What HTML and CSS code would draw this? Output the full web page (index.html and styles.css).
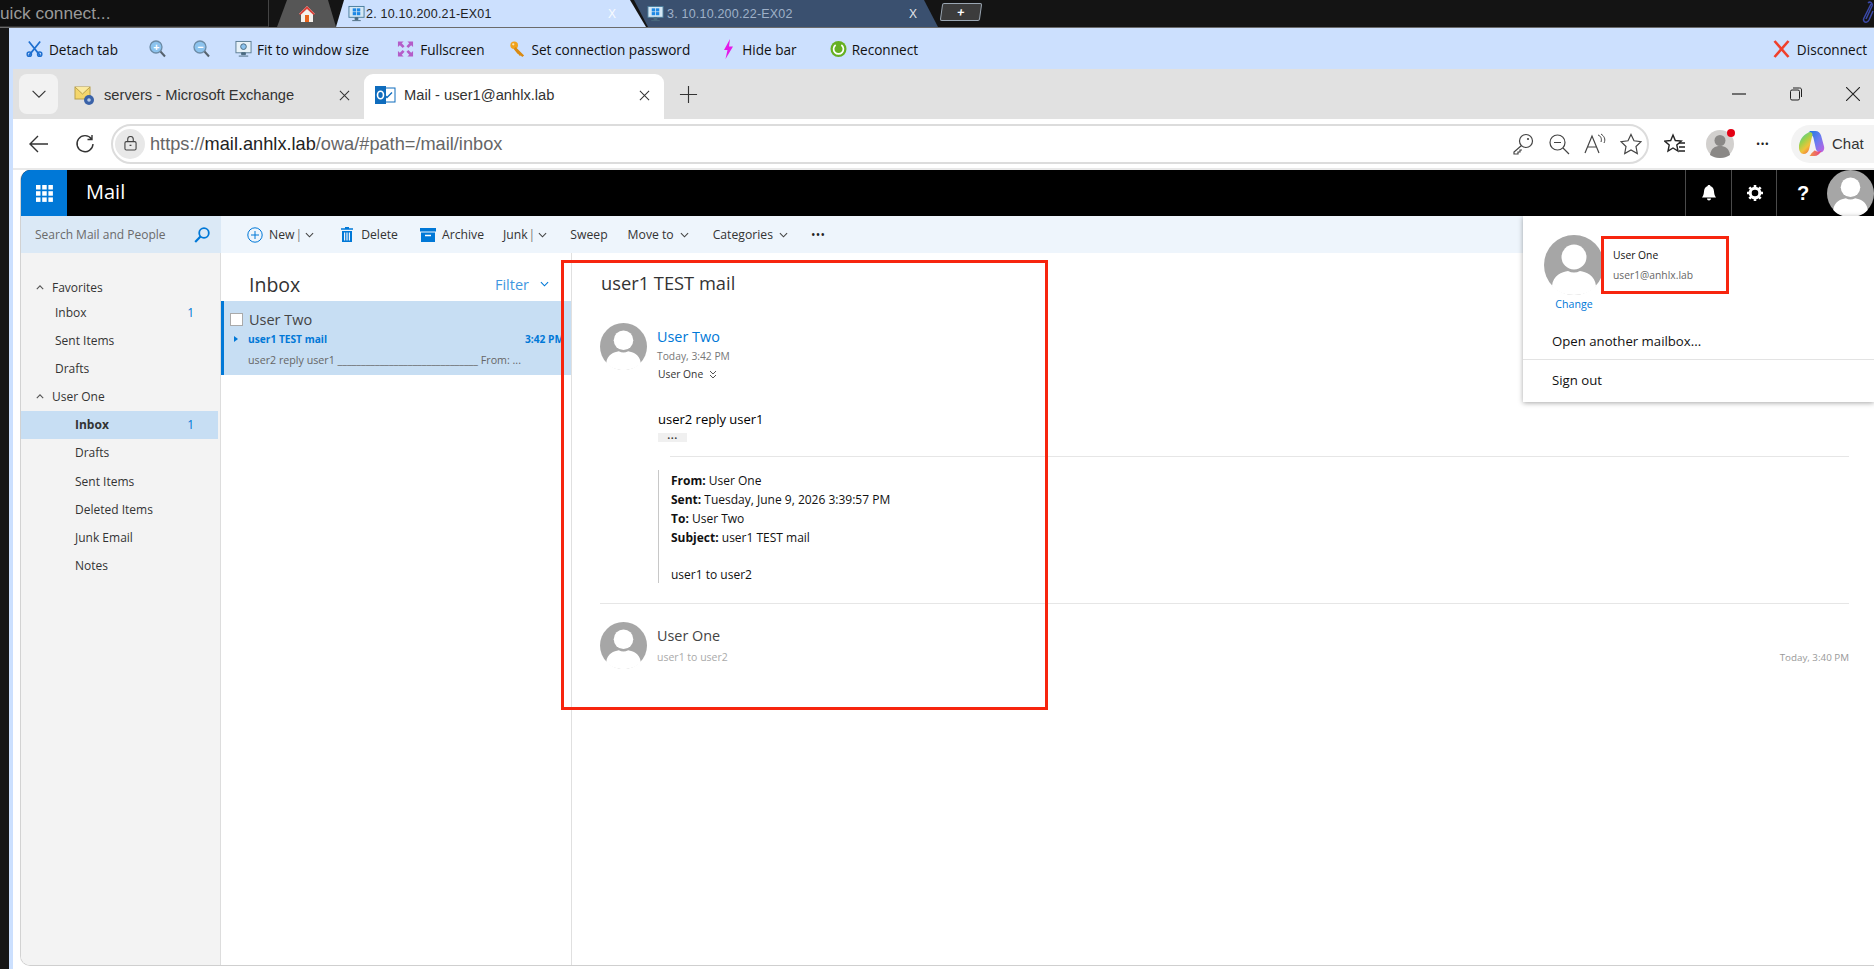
FILE: index.html
```html
<!DOCTYPE html>
<html lang="en">
<head>
<meta charset="utf-8">
<title>Mail - user1@anhlx.lab</title>
<link rel="stylesheet" href="styles.css">
</head>
<body>
<svg class="defs" width="0" height="0">
  <symbol id="avatar" viewBox="0 0 60 60">
    <circle cx="30" cy="30" r="30" fill="#a6a6a6"/>
    <circle cx="30" cy="22" r="12.5" fill="#fff"/>
    <path d="M8 51c1-11 10-14 16-15 4 2 8 2 12 0 6 1 15 4 16 15-5 6-13 9-22 9s-17-3-22-9z" fill="#fff"/>
  </symbol>
  <symbol id="monitor" viewBox="0 0 18 18">
    <rect x="1" y="1" width="16" height="11.5" fill="#d5e8f5" stroke="#4a7d9c"/>
    <rect x="5" y="3" width="3.6" height="3.3" fill="#1e88e5"/><rect x="9.4" y="3" width="3.6" height="3.3" fill="#1e88e5"/>
    <rect x="5" y="7" width="3.6" height="3.3" fill="#1e88e5"/><rect x="9.4" y="7" width="3.6" height="3.3" fill="#1e88e5"/>
    <path d="M7.500 13h3v2h-3zM4.500 16h9" fill="#4a6a80" stroke="#4a6a80"/>
  </symbol>
  <symbol id="zoomglass" viewBox="0 0 17 18">
    <circle cx="7" cy="7" r="6" fill="#8cc3ee" stroke="#6c8ba5" stroke-width="1.300"/>
    <path d="M11.500 11.500l4.500 5" stroke="#56626d" stroke-width="2"/>
  </symbol>
  <symbol id="chev" viewBox="0 0 10 6">
    <path d="M1 1l4 4 4-4" fill="none" stroke="currentColor" stroke-width="1.100" vector-effect="non-scaling-stroke"/>
  </symbol>
</svg>

<div class="page">
  <header class="topbar">
    <div class="quick"><span class="quicktext">uick connect...</span></div>
    <div class="hometab">
      <svg class="ic16" viewBox="0 0 18 18"><path d="M9 1L1 9h2v8h12V9h2z" fill="#f4f0ec"/><path d="M9 1L1 9l1.500 1L9 4l6.500 6L17 9z" fill="#d9423a"/><rect x="7" y="10" width="4" height="7" fill="#e8641e"/></svg>
    </div>
    <div class="rtab rtab-on">
      <svg class="ic18"><use href="#monitor"/></svg>
      <span class="rtabname">2. 10.10.200.21-EX01</span>
      <span class="rtabx">X</span>
    </div>
    <div class="rtab rtab-off">
      <svg class="ic18"><use href="#monitor"/></svg>
      <span class="rtabname">3. 10.10.200.22-EX02</span>
      <span class="rtabx">X</span>
    </div>
    <div class="addtab">+</div>
    <svg class="clip" viewBox="0 0 14 24"><path d="M11 3L4 17c-2 4 3 6 5 2l4-9M8 2c2-2 5 0 4 3L6 18" fill="none" stroke="#3a49a8" stroke-width="1.500"/></svg>
  </header>

  <div class="desk">
    <div class="strip"></div>
    <div class="rdp">
      <nav class="rbar">
        <div class="ritem it-detach">
          <svg class="ic18" viewBox="0 0 18 18"><path d="M3 1l12 15M15 1L3 16" stroke="#1e6fd0" stroke-width="1.800"/><circle cx="3.500" cy="14.500" r="2.300" fill="none" stroke="#1e6fd0" stroke-width="1.500"/><circle cx="14.500" cy="14.500" r="2.300" fill="none" stroke="#1e6fd0" stroke-width="1.500"/></svg>
          <span>Detach tab</span>
        </div>
        <div class="ritem it-zin"><svg class="ic18"><use href="#zoomglass"/></svg><b class="zsign">+</b></div>
        <div class="ritem it-zout"><svg class="ic18"><use href="#zoomglass"/></svg><b class="zsign">−</b></div>
        <div class="ritem it-fit">
          <svg class="ic18" viewBox="0 0 18 18"><rect x="1" y="1" width="16" height="12" fill="#e8f2f8" stroke="#5c7d93"/><circle cx="9" cy="6.500" r="3" fill="#8cc3ee" stroke="#4a6a80"/><path d="M7 13h4v2H7zM4 16.500h10" stroke="#4a6a80" fill="#4a6a80"/></svg>
          <span>Fit to window size</span>
        </div>
        <div class="ritem it-full">
          <svg class="ic18" viewBox="0 0 18 18" fill="#b45cc8"><path d="M1 1h6L5 3l3 3-2 2-3-3-2 2zM17 1v6l-2-2-3 3-2-2 3-3-2-2zM1 17v-6l2 2 3-3 2 2-3 3 2 2zM17 17h-6l2-2-3-3 2-2 3 3 2-2z"/></svg>
          <span>Fullscreen</span>
        </div>
        <div class="ritem it-key">
          <svg class="ic18" viewBox="0 0 18 18"><circle cx="5.500" cy="5" r="4" fill="#f0a21c"/><path d="M7 7l9 9-2 1.500-1.500-1.500-1 .5-1.500-2-1-.5-4-5z" fill="#d98a12"/><circle cx="4.500" cy="4" r="1.200" fill="#fde6b0"/></svg>
          <span>Set connection password</span>
        </div>
        <div class="ritem it-hide">
          <svg class="ic-bolt" viewBox="0 0 11 20"><path d="M7 0L1 11h3.500L2.500 20 10 7.500H6z" fill="#e31ae8"/></svg>
          <span>Hide bar</span>
        </div>
        <div class="ritem it-rec">
          <svg class="ic18" viewBox="0 0 18 18"><circle cx="9" cy="9" r="8.500" fill="#66b022"/><path d="M6 4.800A5.200 5.200 0 1 0 12 4.800" fill="none" stroke="#fff" stroke-width="1.800"/><path d="M9 2v4" stroke="#66b022"/></svg>
          <span>Reconnect</span>
        </div>
        <div class="ritem it-disc">
          <svg class="ic18" viewBox="0 0 16 18"><path d="M1 1l14 16M15 1L1 17" stroke="#f0402c" stroke-width="2.600"/></svg>
          <span>Disconnect</span>
        </div>
      </nav>

      <div class="browser">
        <div class="tabstrip">
          <div class="collapse"><svg class="chev16"><use href="#chev"/></svg></div>
          <div class="btab">
            <svg class="ic22" viewBox="0 0 22 22"><rect x="1" y="3" width="15" height="12" fill="#f4d66c" stroke="#b9a04a"/><path d="M1 3l7.500 7L16 3" fill="#fbeaa0" stroke="#b9a04a"/><circle cx="15" cy="16" r="5" fill="#3a62a8"/><circle cx="15" cy="16" r="1.800" fill="#b8cce8"/></svg>
            <span class="btabname">servers - Microsoft Exchange</span>
            <svg class="xmark" viewBox="0 0 12 12"><path d="M1 1l10 10M11 1L1 11" stroke="#333" stroke-width="1.100"/></svg>
          </div>
          <div class="btab btab-on">
            <svg class="ic22" viewBox="0 0 22 22"><rect x="8" y="4" width="13" height="14" fill="#fff" stroke="#0f6cbd"/><path d="M10.500 11l2.500 2.500 5-5" fill="none" stroke="#0f6cbd" stroke-width="1.400"/><rect x="1" y="2" width="11" height="18" fill="#0f6cbd"/><ellipse cx="6.500" cy="11" rx="3" ry="3.800" fill="none" stroke="#fff" stroke-width="1.600"/></svg>
            <span class="btabname">Mail - user1@anhlx.lab</span>
            <svg class="xmark" viewBox="0 0 12 12"><path d="M1 1l10 10M11 1L1 11" stroke="#333" stroke-width="1.100"/></svg>
          </div>
          <svg class="newtab" viewBox="0 0 20 20"><path d="M10 1v18M1 10h18" stroke="#333" stroke-width="1.200"/></svg>
          <div class="winctl">
            <svg class="winbtn" viewBox="0 0 14 14"><path d="M0 7h14" stroke="#222" stroke-width="1.200"/></svg>
            <svg class="winbtn" viewBox="0 0 14 14"><rect x="1.500" y="3" width="9" height="10" rx="1.500" fill="none" stroke="#222"/><path d="M4 1h6.500c1.500 0 2 .5 2 2v7" fill="none" stroke="#222"/></svg>
            <svg class="winbtn" viewBox="0 0 14 14"><path d="M0 0l14 14M14 0L0 14" stroke="#222" stroke-width="1.100"/></svg>
          </div>
        </div>

        <div class="addr">
          <svg class="navic" viewBox="0 0 20 20"><path d="M19 10H2M9 2l-8 8 8 8" fill="none" stroke="#333" stroke-width="1.400"/></svg>
          <svg class="navic reload" viewBox="0 0 20 20"><path d="M16.500 5A8 8 0 1 0 18 10M17 1v4.500h-4.500" fill="none" stroke="#333" stroke-width="1.400"/></svg>
          <div class="urlbox">
            <span class="lock"><svg class="lockic" viewBox="0 0 14 16"><rect x="1" y="6" width="12" height="9" rx="1.500" fill="none" stroke="#444" stroke-width="1.200"/><path d="M4 6V3.500a3 3 0 0 1 6 0V6" fill="none" stroke="#444" stroke-width="1.200"/><path d="M6 10h2" stroke="#444" stroke-width="1.400"/></svg></span>
            <span class="url"><span class="urlfade">https://</span>mail.anhlx.lab<span class="urlfade">/owa/#path=/mail/inbox</span></span>
            <div class="urlicons">
              <svg class="ic22" viewBox="0 0 22 22"><circle cx="14" cy="8" r="6.500" fill="none" stroke="#444" stroke-width="1.200"/><circle cx="16" cy="6" r="1.100" fill="#444"/><path d="M9.500 12.500L2 19v2h4v-2h2v-2h2" fill="none" stroke="#444" stroke-width="1.200"/></svg>
              <svg class="ic22" viewBox="0 0 22 22"><circle cx="9.500" cy="9.500" r="7.500" fill="none" stroke="#444" stroke-width="1.200"/><path d="M15 15l6 6M6 9.500h7" stroke="#444" stroke-width="1.200"/></svg>
              <svg class="ic22" viewBox="0 0 22 22"><path d="M1 20L8 3l7 17M4 14h8" fill="none" stroke="#444" stroke-width="1.200"/><path d="M14 2c3 1 4 4 3 7M17 1c3 2 5 5 3 9" fill="none" stroke="#444"/></svg>
              <svg class="ic22" viewBox="0 0 22 22"><path d="M11 1.500l3 6.300 7 .9-5 4.800 1.300 7L11 17l-6.300 3.500 1.300-7-5-4.800 7-.9z" fill="none" stroke="#444" stroke-width="1.200"/></svg>
            </div>
          </div>
          <svg class="ic22 favs" viewBox="0 0 22 22"><path d="M9 2l2.300 5.500 6 .6-4.500 4 1.200 6L9 15l-5 3.100 1.200-6-4.500-4 6-.6z" fill="none" stroke="#222" stroke-width="1.400"/><path d="M15 10h6M15 14h6M15 18h6" stroke="#222" stroke-width="1.300"/></svg>
          <div class="profile">
            <svg class="profav" viewBox="0 0 28 28"><circle cx="14" cy="14" r="14" fill="#d2d0ce"/><circle cx="14" cy="10.500" r="5.500" fill="#8a8886"/><path d="M4 25c1-7 5-9 10-9s9 2 10 9c-3 2-6 3-10 3s-7-1-10-3z" fill="#8a8886"/></svg>
            <span class="reddot"></span>
          </div>
          <div class="bdots">•••</div>
          <div class="chat">
            <svg class="copilot" viewBox="0 0 28 28">
              <defs>
                <linearGradient id="cpa" x1="0" y1="0" x2="1" y2="1"><stop offset="0" stop-color="#1f78e0"/><stop offset=".5" stop-color="#6a7cf0"/><stop offset="1" stop-color="#c85fe0"/></linearGradient>
                <linearGradient id="cpb" x1="0" y1="0" x2=".6" y2="1"><stop offset="0" stop-color="#2fc7c0"/><stop offset=".45" stop-color="#9fd24a"/><stop offset=".75" stop-color="#f2c23a"/><stop offset="1" stop-color="#f0803a"/></linearGradient>
                <linearGradient id="cpc" x1="0" y1="0" x2="1" y2="0"><stop offset="0" stop-color="#f2a33a"/><stop offset="1" stop-color="#e7398c"/></linearGradient>
              </defs>
              <path d="M12 1h6c3 0 5 2 6 5l3 11c1 4-2 7-5 6-2 0-3-2-3.500-3.500L16 8c-.5-2-2-3-4-3z" fill="url(#cpa)"/>
              <path d="M10 3c2-1.500 5-1 5 2l-3.500 15c-.8 3-3 5-5.500 5C3 25 1 22 1 18 1 11 5 5 10 3z" fill="url(#cpb)"/>
              <path d="M11 27h6c3 0 6-2 7.500-6-2 2-5 2-7 0L14 24c-1 2-2 3-3 3z" fill="url(#cpc)"/>
            </svg>
            <span class="chattext">Chat</span>
          </div>
        </div>

        <div class="owa">
          <div class="owahead">
            <div class="waffle">
              <svg class="wafic" viewBox="0 0 17 17" fill="#fff"><rect width="4.500" height="4.500"/><rect x="6.200" width="4.500" height="4.500"/><rect x="12.400" width="4.500" height="4.500"/><rect y="6.200" width="4.500" height="4.500"/><rect x="6.200" y="6.200" width="4.500" height="4.500"/><rect x="12.400" y="6.200" width="4.500" height="4.500"/><rect y="12.400" width="4.500" height="4.500"/><rect x="6.200" y="12.400" width="4.500" height="4.500"/><rect x="12.400" y="12.400" width="4.500" height="4.500"/></svg>
            </div>
            <div class="apptitle">Mail</div>
            <div class="headbtns">
              <div class="hbtn"><svg class="hic" viewBox="0 0 16 16" fill="#fff"><path d="M8 0c1 0 1.500.6 1.600 1.300C12 2 12.800 4 13 6.500c.2 2.500.8 4.500 2 6H1c1.200-1.500 1.800-3.500 2-6C3.200 4 4 2 6.400 1.300 6.500.6 7 0 8 0zM6 13.500h4c0 1.200-.8 2-2 2s-2-.8-2-2z"/></svg></div>
              <div class="hbtn"><svg class="hic" viewBox="0 0 16 16"><circle cx="8" cy="8" r="4.800" fill="none" stroke="#fff" stroke-width="3"/><path d="M8 0v3M8 13v3M0 8h3M13 8h3M2.300 2.300l2.100 2.100M11.600 11.600l2.100 2.100M13.700 2.300l-2.100 2.100M4.400 11.600l-2.100 2.100" stroke="#fff" stroke-width="2.600"/></svg></div>
              <div class="hbtn qmark">?</div>
              <svg class="headav"><use href="#avatar"/></svg>
            </div>
          </div>

          <div class="cmdrow">
            <div class="search">
              <span class="searchtext">Search Mail and People</span>
              <svg class="searchic" viewBox="0 0 16 16"><circle cx="10" cy="6" r="4.800" fill="none" stroke="#0078d7" stroke-width="1.800"/><path d="M6.500 9.500L1.200 15" stroke="#0078d7" stroke-width="2.200"/></svg>
            </div>
            <div class="cmdbar">
              <span class="cmd cmd-new">
                <svg class="cmdic" viewBox="0 0 16 16"><circle cx="8" cy="8" r="7.200" fill="none" stroke="#0078d7"/><path d="M8 4v8M4 8h8" stroke="#0078d7"/></svg>
                New<i class="pipe">|</i><svg class="chevs"><use href="#chev"/></svg>
              </span>
              <span class="cmd cmd-del">
                <svg class="cmdic-d" viewBox="0 0 12 15" fill="#0078d7"><path d="M4 0h4v1.300h4v1.500H0V1.300h4z"/><path d="M1 4h10v11H1zM3 5.500v8h1.200v-8zm2.400 0v8h1.200v-8zm2.400 0v8H9v-8z" fill-rule="evenodd"/></svg>
                Delete
              </span>
              <span class="cmd cmd-arc">
                <svg class="cmdic-a" viewBox="0 0 16 14"><path d="M0 0h16v3.500H0zM1 4.500h14V14H1z" fill="#0078d7"/><path d="M5 7.500h6" stroke="#fff" stroke-width="1.500"/></svg>
                Archive
              </span>
              <span class="cmd cmd-junk">Junk<i class="pipe">|</i><svg class="chevs"><use href="#chev"/></svg></span>
              <span class="cmd cmd-sweep">Sweep</span>
              <span class="cmd cmd-move">Move to<svg class="chevs"><use href="#chev"/></svg></span>
              <span class="cmd cmd-cat">Categories<svg class="chevs"><use href="#chev"/></svg></span>
              <span class="cmd cmd-more">•••</span>
            </div>
          </div>

          <div class="panes">
            <aside class="folders">
              <div class="group group-top"><svg class="chevup"><use href="#chev"/></svg>Favorites</div>
              <div class="folder lvl1"><span>Inbox</span><span class="count">1</span></div>
              <div class="folder lvl1">Sent Items</div>
              <div class="folder lvl1">Drafts</div>
              <div class="group"><svg class="chevup"><use href="#chev"/></svg>User One</div>
              <div class="folder lvl2 folder-on"><span>Inbox</span><span class="count">1</span></div>
              <div class="folder lvl2">Drafts</div>
              <div class="folder lvl2">Sent Items</div>
              <div class="folder lvl2">Deleted Items</div>
              <div class="folder lvl2">Junk Email</div>
              <div class="folder lvl2">Notes</div>
            </aside>

            <section class="list">
              <div class="listhead">
                <span class="listtitle">Inbox</span>
                <span class="filter">Filter<svg class="filterchev"><use href="#chev"/></svg></span>
              </div>
              <div class="msg">
                <div class="msgfrom"><span class="check"></span>User Two</div>
                <div class="msgsubj"><span class="tri"></span><span>user1 TEST mail</span><span class="msgtime">3:42 PM</span></div>
                <div class="msgprev">user2 reply user1 ______________________________ From: ...</div>
              </div>
            </section>

            <main class="reading">
              <h1 class="subject">user1 TEST mail</h1>
              <div class="thread">
                <svg class="av47"><use href="#avatar"/></svg>
                <div>
                  <div class="sender">User Two</div>
                  <div class="when">Today, 3:42 PM</div>
                  <div class="towho">User One <svg class="dbl" viewBox="0 0 8 9"><path d="M1 1l3 3 3-3M1 5l3 3 3-3" fill="none" stroke="#555"/></svg></div>
                </div>
              </div>
              <div class="body">
                <p class="bodytext">user2 reply user1</p>
                <div class="ellip">•••</div>
                <hr class="rule">
                <blockquote class="quote">
                  <div><b>From:</b> User One</div>
                  <div><b>Sent:</b> Tuesday, June 9, 2026 3:39:57 PM</div>
                  <div><b>To:</b> User Two</div>
                  <div><b>Subject:</b> user1 TEST mail</div>
                  <div class="blank"></div>
                  <div class="quotebody">user1 to user2</div>
                </blockquote>
              </div>
              <hr class="rule2">
              <div class="thread thread2">
                <svg class="av47"><use href="#avatar"/></svg>
                <div class="t2text">
                  <div class="sender2">User One</div>
                  <div class="t2row"><span class="snippet">user1 to user2</span><span class="t2when">Today, 3:40 PM</span></div>
                </div>
              </div>
            </main>
          </div>
        </div>
      </div>
    </div>
  </div>

  <div class="menu">
    <div class="menutop">
      <div class="menuav">
        <svg class="av60"><use href="#avatar"/></svg>
        <span class="change">Change</span>
      </div>
      <div class="menuname">
        <div class="mn1">User One</div>
        <div class="mn2">user1@anhlx.lab</div>
      </div>
    </div>
    <div class="menuitem mi-open">Open another mailbox...</div>
    <div class="menuitem mi-out">Sign out</div>
  </div>

  <div class="redbox redbox-main"></div>
  <div class="redbox redbox-name"></div>
</div>
</body>
</html>
```

FILE: styles.css
```css
* { box-sizing: border-box; }
html, body { margin: 0; padding: 0; }
body { font-family: "Open Sans", "Liberation Sans", sans-serif; color: #333; background: #fff; overflow: hidden; }
.defs { position: absolute; }
.page { position: relative; width: 1874px; height: 969px; display: flex; flex-direction: column; overflow: hidden; }

/* remote-desktop tab bar */
.topbar { height: 28px; flex: none; background: #141414; border-bottom: 1px solid #6b6b6b; display: flex; align-items: stretch; }
.quick { width: 269px; height: 27px; border-right: 1px solid #444; border-bottom: 1px solid #333; background: #101010; display: flex; align-items: center; overflow: hidden; }
.quicktext { font-size: 17.300px; color: #9a9a9a; font-family: "Liberation Sans", sans-serif; }
.hometab { width: 67px; margin-left: 8px; background: #565656; clip-path: polygon(10px 0, 51px 0, 59px 27px, 0 27px); display: flex; align-items: center; padding-left: 21px; }
.rtab { height: 27px; display: flex; align-items: center; font-size: 12.500px; font-family: "Liberation Sans", sans-serif; letter-spacing: .2px; }
.rtab-on { width: 310px; margin-left: -8px; background: #cce0fe; color: #222; padding-left: 12px; clip-path: polygon(0 27px, 8px 0, 294px 0, 310px 27px); }
.rtab-off { width: 304px; margin-left: -12px; background: #3a506f; color: #9fb0c8; padding-left: 13px; clip-path: polygon(0 0, 290px 0, 304px 27px, 14px 27px); }
.rtabname { margin-left: 1px; width: 242px; }
.rtab-off .rtabname { margin-left: 3px; width: 242px; }
.rtabx { font-size: 12px; color: #fff; opacity: .85; }
.addtab { width: 40px; height: 18px; margin: 3px 0 0 3px; border: 1px solid #9aa6b2; background: #3c3c3c; color: #fff; font-size: 13px; font-weight: 700; display: flex; align-items: center; justify-content: center; transform: skewX(-8deg); border-radius: 2px; }
.clip { width: 14px; height: 24px; margin: 1px 0 0 auto; }
.ic16 { width: 18px; height: 18px; flex: none; }
.ic18 { width: 17px; height: 18px; flex: none; }
.ic22 { width: 22px; height: 22px; flex: none; }

/* desk */
.desk { flex: 1; min-height: 0; display: flex; }
.strip { width: 9px; flex: none; background: #161616; }
.rdp { flex: 1; min-width: 0; background: #cce0fe; display: flex; flex-direction: column; }

.rbar { height: 41px; flex: none; display: flex; align-items: center; padding: 1px 0 0 17px; font-size: 13.600px; color: #111; }
.ritem { display: flex; align-items: center; gap: 6px; position: relative; white-space: nowrap; }
.it-zin { margin-left: 31px; }
.it-zout { margin-left: 27px; }
.it-fit { margin-left: 25px; gap: 5px; }
.it-full { margin-left: 28px; gap: 6px; }
.it-key { margin-left: 24px; gap: 6px; }
.it-hide { margin-left: 33px; gap: 8px; }
.it-rec { margin-left: 33px; gap: 5px; }
.it-disc { margin-left: auto; margin-right: 7px; gap: 7px; }
.ic-bolt { width: 11px; height: 20px; flex: none; }
.zsign { position: absolute; left: 3px; top: -2px; width: 9px; text-align: center; color: #fff; font-size: 11px; line-height: 18px; }

.browser { flex: 1; min-height: 0; margin-left: 4px; background: #fff; display: flex; flex-direction: column; }
.tabstrip { height: 50px; flex: none; background: #e1e1e1; display: flex; align-items: flex-end; position: relative; }
.collapse { width: 39px; height: 40px; margin: 0 0 5px 6px; background: #f2f2f2; border-radius: 8px; display: flex; align-items: center; justify-content: center; color: #333; }
.chev16 { width: 16px; height: 10px; }
.btab { width: 306px; height: 45px; display: flex; align-items: center; color: #333; padding: 0 14px 3px 16px; }
.btab .btabname { margin-left: 8px; flex: 1; white-space: nowrap; font-family: "Liberation Sans", sans-serif; font-size: 14.700px; }
.btab-on { width: 300px; background: #fff; border-radius: 9px 9px 0 0; padding: 0 14px 3px 10px; }
.xmark { width: 11px; height: 11px; flex: none; }
.newtab { width: 19px; height: 19px; margin: 0 0 15px 15px; }
.winctl { margin-left: auto; display: flex; gap: 43px; padding: 0 14px 18px 0; }
.winbtn { width: 14px; height: 14px; }

.addr { height: 51px; flex: none; background: #fff; border-bottom: 2px solid #e9e9e9; display: flex; align-items: center; }
.navic { width: 20px; height: 20px; margin-left: 16px; flex: none; }
.reload { margin-left: 26px; }
.urlbox { width: 1538px; height: 40px; margin-left: 16px; border: 2px solid #dcdcdc; border-radius: 20px; display: flex; align-items: center; padding-left: 2px; }
.lock { width: 30px; height: 30px; border-radius: 50%; background: #e8e8e8; display: flex; align-items: center; justify-content: center; flex: none; }
.lockic { width: 13px; height: 15px; }
.url { margin-left: 5px; padding-top: 1px; font-size: 18.200px; font-family: "Liberation Sans", sans-serif; color: #222; }
.urlfade { color: #666; }
.urlicons { margin-left: auto; display: flex; gap: 14px; padding-right: 5px; }
.favs { margin-left: 15px; }
.profile { position: relative; width: 28px; height: 28px; margin-left: 20px; flex: none; }
.profav { width: 28px; height: 28px; display: block; }
.reddot { position: absolute; right: -1px; top: -1px; width: 8px; height: 8px; border-radius: 50%; background: #e40014; }
.bdots { margin-left: 22px; font-size: 11px; color: #222; letter-spacing: .3px; width: 22px; }
.chat { margin-left: 13px; height: 38px; flex: 1; background: #f3f3f3; border-radius: 19px 0 0 19px; display: flex; align-items: center; padding-left: 7px; gap: 7px; }
.copilot { width: 27px; height: 27px; flex: none; }
.chattext { font-size: 15px; color: #333; font-family: "Liberation Sans", sans-serif; }

/* OWA */
.owa { flex: 1; min-height: 0; margin: 0 0 3px 7px; display: flex; flex-direction: column; border-left: 1px solid #d2d2d2; border-bottom: 1px solid #cfcfcf; border-radius: 10px 0 0 10px; overflow: hidden; }
.owahead { height: 46px; flex: none; background: #000; display: flex; align-items: stretch; color: #fff; }
.waffle { width: 46px; background: #0078d7; display: flex; align-items: center; justify-content: center; }
.wafic { width: 17px; height: 17px; }
.apptitle { margin-left: 19px; font-size: 20px; line-height: 44px; }
.headbtns { margin-left: auto; display: flex; position: relative; overflow: hidden; width: 189px; }
.hbtn { width: 47px; padding-left: 2px; border-left: 1px solid #4a4a4a; display: flex; align-items: center; justify-content: center; }
.hic { width: 16px; height: 16px; }
.qmark { font-size: 20px; font-weight: 700; font-family: "Liberation Sans", sans-serif; padding-left: 7px; }
.headav { width: 47px; height: 47px; flex: none; margin-left: 5px; }

.cmdrow { height: 37px; flex: none; display: flex; }
.search { width: 200px; background: #dbe9f6; display: flex; align-items: center; padding: 0 11px 0 14px; justify-content: space-between; font-size: 12px; color: #6a6a6a; }
.searchic { width: 16px; height: 16px; }
.cmdbar { flex: 1; background: #eef5fc; display: flex; align-items: center; font-size: 12.200px; color: #333; padding-left: 26px; white-space: nowrap; }
.cmd { display: flex; align-items: center; }
.cmdic { width: 16px; height: 16px; margin-right: 6px; }
.cmdic-d { width: 12px; height: 15px; margin-right: 8px; }
.cmdic-a { width: 16px; height: 14px; margin-right: 6px; }
.pipe { font-style: normal; color: #777; margin: 0 3px 0 1px; }
.chevs { width: 9px; height: 6px; color: #444; }
.cmd-del { margin-left: 27px; }
.cmd-arc { margin-left: 22px; }
.cmd-junk { margin-left: 19px; }
.cmd-sweep { margin-left: 23px; }
.cmd-move { margin-left: 20px; }
.cmd-move .chevs, .cmd-cat .chevs { margin-left: 6px; }
.cmd-cat { margin-left: 24px; }
.cmd-more { margin-left: 23px; font-size: 12px; letter-spacing: .3px; color: #222; }

.panes { flex: 1; min-height: 0; display: flex; }
.folders { width: 200px; flex: none; background: #f3f3f3; border-right: 1px solid #ddd; padding: 23px 2px 0 0; font-size: 12px; color: #333; }
.group { height: 28px; display: flex; align-items: center; padding-left: 15px; }
.group-top { height: 22px; }
.chevup { width: 8px; height: 5px; margin-right: 8px; transform: rotate(180deg); color: #555; }
.folder { height: 28.200px; display: flex; align-items: center; justify-content: space-between; padding-right: 24px; }
.lvl1 { padding-left: 34px; }
.lvl2 { padding-left: 54px; }
.folder-on { background: #c7def3; font-weight: 700; }
.count { color: #0078d7; font-weight: 400; font-size: 12px; }

.list { width: 351px; flex: none; border-right: 1px solid #e0e0e0; }
.listhead { height: 48px; display: flex; align-items: center; justify-content: space-between; padding: 14px 22px 0 28px; }
.listtitle { font-size: 19.500px; color: #333; }
.filter { font-size: 14.500px; color: #3f97e0; display: flex; align-items: center; }
.filterchev { width: 9px; height: 6px; margin-left: 11px; color: #0078d7; }
.msg { height: 74px; background: #c7def3; border-left: 3px solid #0078d7; padding: 8px 7px 0 6px; }
.msgfrom { display: flex; align-items: center; font-size: 14.500px; color: #444; height: 20px; }
.check { width: 13px; height: 13px; background: #fff; border: 1px solid #aaa; margin-right: 6px; flex: none; }
.msgsubj { display: flex; align-items: center; margin-top: 1px; height: 18px; font-size: 10.200px; font-weight: 700; color: #0078d7; }
.tri { width: 0; height: 0; border-left: 4px solid #0078d7; border-top: 3.500px solid transparent; border-bottom: 3.500px solid transparent; margin: 0 10px 0 4px; flex: none; }
.msgtime { margin-left: auto; }
.msgprev { margin-top: 5px; padding-left: 18px; font-size: 10.700px; color: #666; white-space: nowrap; overflow: hidden; }

.reading { flex: 1; min-width: 0; padding: 0 25px 0 28px; }
.subject { margin: 17px 0 0 1px; font-size: 18.300px; line-height: 26px; font-weight: 400; color: #333; }
.thread { display: flex; margin-top: 27px; gap: 10px; }
.av47 { width: 47px; height: 47px; flex: none; }
.sender { font-size: 14.400px; line-height: 20px; color: #0078d7; margin-top: 4px; }
.when { font-size: 10.300px; line-height: 16px; margin-top: 1px; color: #777; }
.towho { font-size: 10.300px; line-height: 16px; margin-top: 2px; margin-left: 1px; color: #333; display: flex; align-items: center; gap: 6px; }
.dbl { width: 8px; height: 9px; }
.body { padding-left: 58px; margin-top: 27px; }
.bodytext { margin: 0; font-size: 13px; line-height: 20px; color: #000; }
.ellip { width: 29px; height: 9px; margin-top: 4px; background: #f0f0f0; color: #444; font-size: 8px; line-height: 9px; text-align: center; letter-spacing: .5px; }
.rule { height: 1px; margin: 14px 0 0 12px; border: 0; background: #e6e6e6; }
.quote { margin: 13px 0 0; padding: 1px 0 0 12px; border-left: 1px solid #c8c8c8; height: 113px; font-size: 12px; line-height: 19px; color: #111; }
.blank { height: 18px; }
.rule2 { height: 1px; margin: 20px 0 0; border: 0; background: #e6e6e6; }
.thread2 { margin-top: 18px; }
.t2text { flex: 1; min-width: 0; }
.sender2 { font-size: 14.400px; line-height: 20px; color: #444; margin-top: 4px; }
.t2row { display: flex; justify-content: space-between; align-items: center; margin-top: 4px; }
.snippet { font-size: 10.500px; color: #aaa; }
.t2when { font-size: 9.800px; color: #999; }

/* account menu */
.menu { position: absolute; left: 1523px; top: 216px; width: 351px; height: 186px; background: #fff; box-shadow: 0 1px 5px rgba(0,0,0,.35); }
.menutop { display: flex; padding: 19px 0 0 21px; height: 107px; }
.menuav { width: 60px; display: flex; flex-direction: column; align-items: center; }
.av60 { width: 60px; height: 60px; flex: none; }
.change { font-size: 10.600px; color: #0078d7; margin-top: 2px; }
.menuname { margin-left: 9px; padding-top: 12px; }
.mn1 { font-size: 10.300px; line-height: 16px; color: #111; }
.mn2 { font-size: 10.300px; line-height: 16px; margin-top: 4px; color: #666; }
.menuitem { padding-left: 29px; font-size: 13.200px; color: #111; display: flex; align-items: center; }
.mi-open { height: 37px; border-bottom: 1px solid #e3e3e3; }
.mi-out { height: 39px; }

.redbox { position: absolute; border: 3px solid #f7250e; pointer-events: none; }
.redbox-main { left: 561px; top: 260px; width: 487px; height: 450px; }
.redbox-name { left: 1601px; top: 236px; width: 128px; height: 58px; }
```
